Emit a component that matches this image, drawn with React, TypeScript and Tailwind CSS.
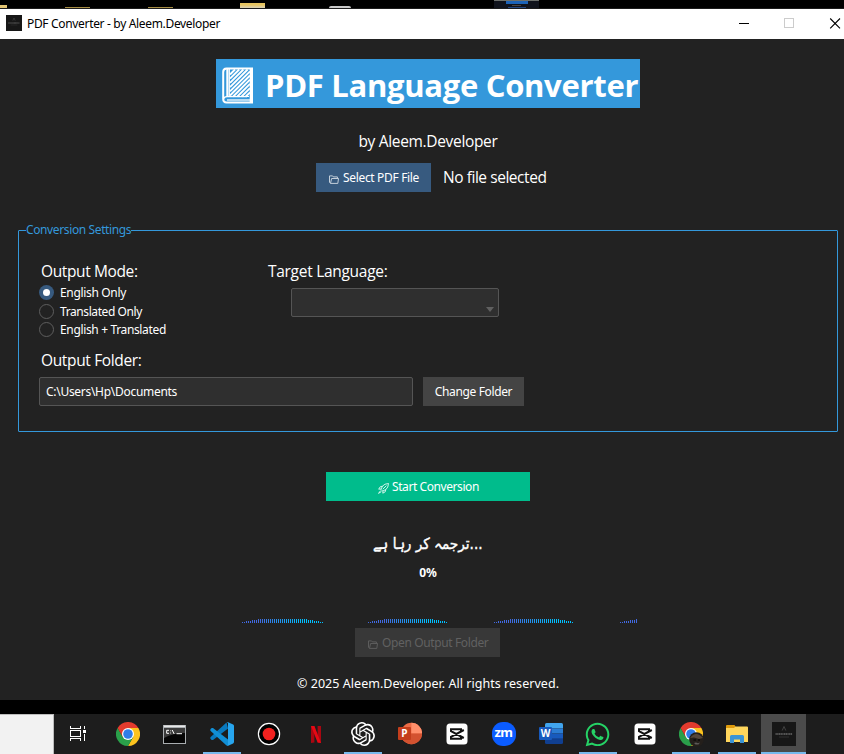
import type { ReactNode } from "react";
import { FaWhatsapp } from "react-icons/fa";
import { SiOpenai } from "react-icons/si";

const WAVES = [
  { x: 0, bars: 41 },
  { x: 126, bars: 40 },
  { x: 252, bars: 40 },
  { x: 378, bars: 9 },
];

function barHeight(i: number) {
  const edge = Math.min(i, 40 - i);
  return edge < 2 ? 1 : edge < 5 ? 2 : edge < 8 ? 3 : 4;
}

function barColor(i: number) {
  const t = Math.min(1, Math.max(0, (i - 8) / 22));
  const mix = (a: number, b: number) => Math.round(a + (b - a) * t);
  return `rgb(${mix(65, 0)},${mix(105, 191)},${mix(225, 255)})`;
}

function Waves() {
  return (
    <svg className="block h-1 w-[396px]" viewBox="0 0 396 4" shapeRendering="crispEdges">
      {WAVES.map((w) =>
        Array.from({ length: w.bars }, (_, i) => (
          <rect key={`${w.x}-${i}`} x={w.x + i * 2} y={4 - barHeight(i)} width="1" height={barHeight(i)} fill={barColor(i)} />
        )),
      )}
    </svg>
  );
}

function BookIcon() {
  return (
    <svg className="h-[37px] w-8 shrink-0" viewBox="0 0 32 37" fill="none" stroke="#fff">
      <path d="M4.5 1.5H30V35.5H4.5Q1.2 35.5 1.2 32V5Q1.2 1.5 4.5 1.5Z" strokeWidth="2" />
      <path d="M5.4 2V30" strokeWidth="2.2" />
      <path d="M1.5 32Q2 29.6 5 29.6H25" strokeWidth="1.3" />
      <path d="M5 33H29" strokeWidth="1.3" />
      <path d="M29.2 2V35" strokeWidth="3" />
      <path d="M7.3 2V29.5H27" strokeWidth="1.2" />
      <path
        d="M8 7.5L13 2.5M8 11.7L17.2 2.5M8 15.9L21.4 2.5M8 20.1L25.6 2.5M8 24.3L28 4.3M8 28.5L28 8.5M11.2 29.5L28 12.7M15.4 29.5L28 16.9M19.6 29.5L28 21.1M23.8 29.5L28 25.3"
        strokeWidth="1.9"
      />
    </svg>
  );
}

function FolderIcon() {
  return (
    <svg className="h-[9px] w-[10px] shrink-0" viewBox="0 0 10 9" fill="none" stroke="currentColor" strokeWidth="0.9">
      <path d="M1.4 8.3L0.5 7.3V0.9H3.6L4.4 1.9H8.4V3.4" />
      <path d="M1.5 8.4L2.6 3.5H9.5L8.8 8.4Z" />
    </svg>
  );
}

function RocketIcon() {
  return (
    <svg className="h-[11px] w-[11px] shrink-0" viewBox="0 0 11 11" fill="none" stroke="#fff" strokeWidth="0.8">
      <path d="M10.5 0.5Q6.5 0.6 4.4 3.2L3 6.4L4.6 8L7.8 6.6Q10.4 4.5 10.5 0.5Z" />
      <path d="M4.4 3.2L2.2 3.8L0.7 6.2L3 6M7.8 6.6L7.2 8.8L4.8 10.2L5 8" />
      <path d="M2.6 7.6L0.5 10.4L3.4 8.6M4.8 6.2L8.4 2.6" />
    </svg>
  );
}

function AppBadge({ className }: { className: string }) {
  return (
    <div className={`flex items-center justify-center bg-[#171717] ${className}`}>
      <svg className="w-full" viewBox="0 0 24 24" fill="none">
        <path d="M10.2 8.5L12 4.5L13.8 8.5" stroke="#555" strokeWidth="0.7" />
        <path d="M3.5 12H20.5" stroke="#8a8a8a" strokeWidth="1.5" strokeDasharray="1.3 0.4" opacity="0.7" />
        <path d="M7 15H17" stroke="#3a3a3a" strokeWidth="0.7" />
      </svg>
    </div>
  );
}

function Radio({ label, checked, className }: { label: string; checked?: boolean; className: string }) {
  return (
    <label className={`flex items-center text-[12px] ${className}`}>
      {checked ? (
        <span className="mr-[6px] flex size-[15px] items-center justify-center rounded-full bg-[#375a7f]">
          <span className="size-[7px] rounded-full bg-white" />
        </span>
      ) : (
        <span className="mr-[6px] size-[15px] rounded-full border border-[#5e5e5e]" />
      )}
      {label}
    </label>
  );
}

function Chrome() {
  return (
    <svg className="size-6" viewBox="0 0 48 48">
      <path d="M24 12H44.8A24 24 0 0 1 24 48L34.4 30Z" fill="#fcc31e" />
      <path d="M13.6 30L3.2 12A24 24 0 0 0 24 48L34.4 30Z" fill="#2a9f4a" />
      <path d="M3.2 12L13.6 30L24 24V12H44.8A24 24 0 0 0 3.2 12Z" fill="#e33b2e" />
      <circle cx="24" cy="24" r="12" fill="#fff" />
      <circle cx="24" cy="24" r="9.6" fill="#2f7de9" />
    </svg>
  );
}

function CapCut() {
  return (
    <svg className="size-[22px]" viewBox="0 0 22 22" fill="none" stroke="#111" strokeWidth="2">
      <rect x="0.5" y="0.5" width="21" height="21" rx="3.5" fill="#fff" stroke="none" />
      <path d="M15 8.3V6.2H5V8.2L17.8 15M15 13.7V15.8H5V13.8L17.8 7" />
    </svg>
  );
}

function Slot({ children, open, narrow }: { children?: ReactNode; open?: boolean; narrow?: boolean }) {
  return (
    <div className={`flex h-10 shrink-0 flex-col items-center ${narrow ? "w-[46px]" : "w-[47px]"}`}>
      <div className="flex h-[38px] items-center pt-[2px]">{children}</div>
      {open && <div className="h-[2px] w-[38px] bg-[#76b9ed]" />}
    </div>
  );
}

function Taskbar() {
  return (
    <footer className="flex h-10 overflow-hidden bg-[#1d1d1d]">
      <div className="w-[54px] shrink-0 border-t border-r border-[#bdbdbd] bg-[#f2f2f2]" />
      <div className="flex w-[50px] shrink-0 items-center pl-4">
        <svg className="size-4" viewBox="0 0 16 16" fill="none" stroke="#fff" shapeRendering="crispEdges">
          <path d="M0.5 0V2.5H10.5V0M0.5 15V12.5H10.5V15M0.5 4.5H10.5V10.5H0.5ZM14.5 0V3M14.5 8V15" />
          <path d="M13 5.5H16" strokeWidth="3" />
        </svg>
      </div>
      <Slot><Chrome /></Slot>
      <Slot>
        <svg className="mr-px h-[19px] w-[23px]" viewBox="0 0 23 19">
          <rect width="23" height="19" fill="#a9adb0" />
          <rect x="1" y="0.5" width="21" height="1.5" fill="#e8e8e8" />
          <rect x="1" y="3" width="21" height="15" fill="#050505" />
          <path d="M1 3H22V8Q10 8 1 13Z" fill="#3b3b3b" />
          <path d="M6 5.3H3.7V8.3H6M7.6 5.5V6.2M7.6 7.6V8.4M9.2 5L11.2 9M13.5 8.7H19" fill="none" stroke="#fff" strokeWidth="1" />
        </svg>
      </Slot>
      <Slot open>
        <svg className="size-6" viewBox="0 0 24 24">
          <path d="M16.5 0.5L0.4 15.2L0.4 16.7L1.7 17.9L3 18L18 6.5Z" fill="#0879bf" />
          <path d="M1.7 6.1L3 6L18 17.4V23.7L16.5 23.5L0.4 8.7V7.3Z" fill="#118fd6" />
          <path d="M16.5 0.5Q17.3 -0.2 18.2 0.2L23.1 2.6Q24 3 24 4V20Q24 21 23.1 21.4L18.2 23.8Q17.3 24.2 16.5 23.5Q18 24 18 22.5V1.5Q18 0 16.5 0.5Z" fill="#27a5ee" />
        </svg>
      </Slot>
      <Slot>
        <svg className="size-6" viewBox="0 0 24 24">
          <circle cx="12" cy="12" r="10.6" fill="#000" stroke="#fff" strokeWidth="1.2" />
          <circle cx="12" cy="12" r="6.3" fill="#f2211f" />
        </svg>
      </Slot>
      <Slot>
        <svg className="h-[17px] w-[10px]" viewBox="0 0 10 17">
          <path d="M0 0H3.4V16.6L0 17ZM6.6 0H10V17L6.6 16.6Z" fill="#a90711" />
          <path d="M0 0H3.4L10 17L6.6 16.6Z" fill="#e50914" />
        </svg>
      </Slot>
      <Slot open><SiOpenai className="size-6 text-white" /></Slot>
      <Slot>
        <svg className="h-6 w-6" viewBox="0 0 24 24">
          <circle cx="13.4" cy="11.5" r="10.7" fill="#ed6c47" />
          <path d="M13.4 0.8A10.7 10.7 0 0 1 24.1 11.5H13.4Z" fill="#ff8f6b" />
          <path d="M2.7 11.5A10.7 10.7 0 0 0 24.1 11.5Z" fill="#d35230" />
          <rect x="0" y="5" width="13" height="13" rx="1" fill="#c43e1c" />
          <text x="6.5" y="15" textAnchor="middle" fill="#fff" fontSize="10" fontWeight="700" fontFamily="Open Sans, sans-serif">P</text>
        </svg>
      </Slot>
      <Slot><CapCut /></Slot>
      <Slot>
        <div className="flex size-6 items-center justify-center rounded-[11px] bg-[#0b5cff] pb-[3px] text-[13px] leading-none font-bold tracking-[-0.5px] text-white">zm</div>
      </Slot>
      <Slot>
        <svg className="h-6 w-6" viewBox="0 0 24 24">
          <path d="M6 6.3V2.5Q6 1 7.5 1H22.5Q24 1 24 2.5V6.3Z" fill="#41a5ee" />
          <path d="M6 6.3H24V11.5H6Z" fill="#2b7cd3" />
          <path d="M6 11.5H24V16.8H6Z" fill="#185abd" />
          <path d="M6 16.8H24V20.5Q24 22 22.5 22H7.5Q6 22 6 20.5Z" fill="#103f91" />
          <rect x="0" y="5" width="13" height="13" rx="1" fill="#185abd" />
          <text x="6.5" y="15" textAnchor="middle" fill="#fff" fontSize="10" fontWeight="700" fontFamily="Open Sans, sans-serif">W</text>
        </svg>
      </Slot>
      <Slot open><FaWhatsapp className="size-[27px] text-[#25d366]" /></Slot>
      <Slot><CapCut /></Slot>
      <Slot narrow open>
        <div className="relative">
          <Chrome />
          <svg className="absolute top-[10px] left-[10px] size-[15px]" viewBox="0 0 15 15">
            <circle cx="7.5" cy="7.5" r="7.3" fill="#241f1b" />
            <path d="M1 6Q7 -2 14 6L10 7L5 5.5Z" fill="#54463a" />
            <path d="M5 11L7 10.4L9 11.2L11 10.5L9.5 12.6H6.5Z" fill="#5d5a58" />
            <path d="M4.5 8H7M9 8H11" stroke="#0d0b0a" strokeWidth="1.4" />
          </svg>
        </div>
      </Slot>
      <Slot narrow open>
        <svg className="h-[19px] w-[22px]" viewBox="0 0 22 19">
          <path d="M0 1Q0 0 1 0H8.5L9.5 1.5V4H0Z" fill="#e09b0c" />
          <path d="M0 3H8L9.5 1.5H21Q22 1.5 22 2.5V17H0Z" fill="#ffd65c" />
          <path d="M4 18V11.5Q4 10 5.5 10H16.5Q18 10 18 11.5V18H14V14.5H8V18Z" fill="#3b94d6" />
        </svg>
      </Slot>
      <div className="ml-px flex h-10 w-[45px] shrink-0 flex-col items-center bg-[#4b4b4b]">
        <div className="flex h-[38px] items-center pt-[2px]">
          <AppBadge className="size-6" />
        </div>
        <div className="h-[2px] w-full bg-[#76b9ed]" />
      </div>
    </footer>
  );
}

export default function App() {
  return (
    <div className="flex h-[754px] w-[844px] flex-col overflow-hidden bg-black font-['Noto_Sans','Open_Sans',sans-serif] whitespace-nowrap text-white">
      <div className="flex h-[9px] shrink-0 items-end border-b border-[#1c1c1c]">
        <div className="h-[3px] w-[7px] bg-[#e2c573]" />
        <div className="ml-[58px] h-px w-[25px] bg-[#a88f45]" />
        <div className="ml-[58px] h-px w-[25px] bg-[#a88f45]" />
        <div className="ml-[67px] h-[5px] w-[25px] bg-linear-to-b from-[#e8c661] from-40% to-[#d9d2b8]" />
        <div className="ml-[64px] h-[2px] w-[22px] rounded-t-sm bg-[#c9c9c9]" />
        <div className="ml-[143px] flex h-[8px] w-[45px] flex-col items-center border-t border-[#6d706c] bg-[#10131c]">
          <div className="h-[3px] w-[22px] bg-[#1c63b8]" />
          <div className="mt-px h-px w-[9px] bg-[#4a4340]" />
          <div className="mt-px h-px w-[18px] bg-[#234680]" />
        </div>
      </div>

      <header className="flex h-[30px] shrink-0 items-center bg-white text-[12px] text-black">
        <AppBadge className="mb-[2px] ml-[6px] size-4" />
        <span className="ml-[5px] tracking-[-0.33px]">PDF Converter - by Aleem.Developer</span>
        <svg className="mr-[3px] mb-[2px] ml-auto h-[11px] w-[102px]" viewBox="0 0 102 11" fill="none" stroke="#000">
          <path d="M0 5.5H10" shapeRendering="crispEdges" />
          <path d="M45.5 0.5H54.5V9.5H45.5Z" stroke="#ccc" shapeRendering="crispEdges" />
          <path d="M91.2 0.5L101 10.3M101 0.5L91.2 10.3" strokeWidth="1.1" />
        </svg>
      </header>

      <main className="flex h-[661px] w-[856px] shrink-0 flex-col items-center bg-[#222222] pt-5">
        <h1 className="flex h-[49px] w-[424px] shrink-0 items-center bg-[#3498db] pt-[3px] pl-[6px] font-['Open_Sans'] text-[31px] leading-none font-bold tracking-[-0.3px]">
          <BookIcon />
          <span className="ml-[11px]">PDF Language Converter</span>
        </h1>
        <p className="mt-[21px] h-6 font-['Open_Sans'] text-[15.5px] leading-6 tracking-[-0.33px]">by Aleem.Developer</p>

        <div className="mt-[10px] flex h-[29px] w-full items-center pl-[316px]">
          <button className="flex h-[29px] w-[115px] items-center bg-[#375a7f] pl-[13px] text-[12px] tracking-[-0.33px]">
            <span className="mt-[4px] text-[#d3dbe4]"><FolderIcon /></span>
            <span className="ml-[4px]">Select PDF File</span>
          </button>
          <span className="mt-px ml-3 font-['Open_Sans'] text-[15.5px] tracking-[-0.45px]">No file selected</span>
        </div>

        <fieldset className="mt-[30px] mr-auto ml-[18px] h-[210px] w-[820px] shrink-0 rounded-[1px] border border-[#3498db]">
          <legend className="ml-[7px] h-[17px] text-[12px] leading-[15px] tracking-[-0.38px] text-[#3498db]">Conversion Settings</legend>
          <div className="flex pt-[22px] pl-5">
            <div className="w-[229px]">
              <div className="ml-[2px] h-5 font-['Open_Sans'] text-[15.5px] leading-[21px] tracking-[-0.38px]">Output Mode:</div>
              <div className="mt-[2px] flex flex-col">
                <Radio checked label="English Only" className="h-[19px] tracking-[-0.33px]" />
                <Radio label="Translated Only" className="h-[19px] tracking-[-0.41px]" />
                <Radio label="English + Translated" className="h-[17px] tracking-[-0.35px]" />
              </div>
            </div>
            <div>
              <div className="h-5 font-['Open_Sans'] text-[15.5px] leading-[21px] tracking-[-0.29px]">Target Language:</div>
              <div className="mt-[7px] ml-[23px] flex h-[29px] w-[208px] items-end justify-end rounded-[2px] border border-[#555] bg-[#2f2f2f] pr-[4px] pb-[4px]">
                <svg className="h-[5px] w-2" viewBox="0 0 8 5">
                  <path d="M0 0H8L4 5Z" fill="#606060" />
                </svg>
              </div>
            </div>
          </div>
          <div className="mt-3 pl-5">
            <div className="ml-[2px] h-5 font-['Open_Sans'] text-[15.5px] leading-[21px] tracking-[-0.35px]">Output Folder:</div>
            <div className="mt-[7px] flex gap-[10px] text-[12px]">
              <div className="flex h-[29px] w-[374px] items-center rounded-[2px] border border-[#555] bg-[#2f2f2f] pl-[6px] tracking-[-0.29px]">
                C:\Users\Hp\Documents
              </div>
              <button className="h-[29px] w-[101px] bg-[#444444] tracking-[-0.37px]">Change Folder</button>
            </div>
          </div>
        </fieldset>

        <button className="mt-10 flex h-[29px] w-[204px] shrink-0 items-center justify-center bg-[#00bc8c] pl-px text-[12px] tracking-[-0.42px]">
          <span className="mt-[4px]"><RocketIcon /></span>
          <span className="ml-[3px]">Start Conversion</span>
        </button>
        <p className="mt-[31px] h-6 scale-x-[0.88] font-['DejaVu_Sans'] text-[15.5px] leading-6 [-webkit-text-stroke:0.4px_white]">ترجمہ کر رہا ہے...</p>
        <p className="mt-[6px] h-5 text-[12px] leading-[21px] font-bold">0%</p>
        <div className="mt-[37px] flex w-full shrink-0 pl-[242px]">
          <Waves />
        </div>
        <button className="mt-[5px] mr-px flex h-[29px] w-[145px] shrink-0 items-center bg-[#383838] pl-[13px] text-[12px] tracking-[-0.37px] text-[#616161]">
          <span className="mt-[4px]"><FolderIcon /></span>
          <span className="ml-[4px]">Open Output Folder</span>
        </button>
        <p className="mt-4 h-5 text-[12.5px] leading-[21px] tracking-[0.04px]">© 2025 Aleem.Developer. All rights reserved.</p>
      </main>
      <div className="h-[14px] shrink-0 bg-black" />
      <Taskbar />
    </div>
  );
}
